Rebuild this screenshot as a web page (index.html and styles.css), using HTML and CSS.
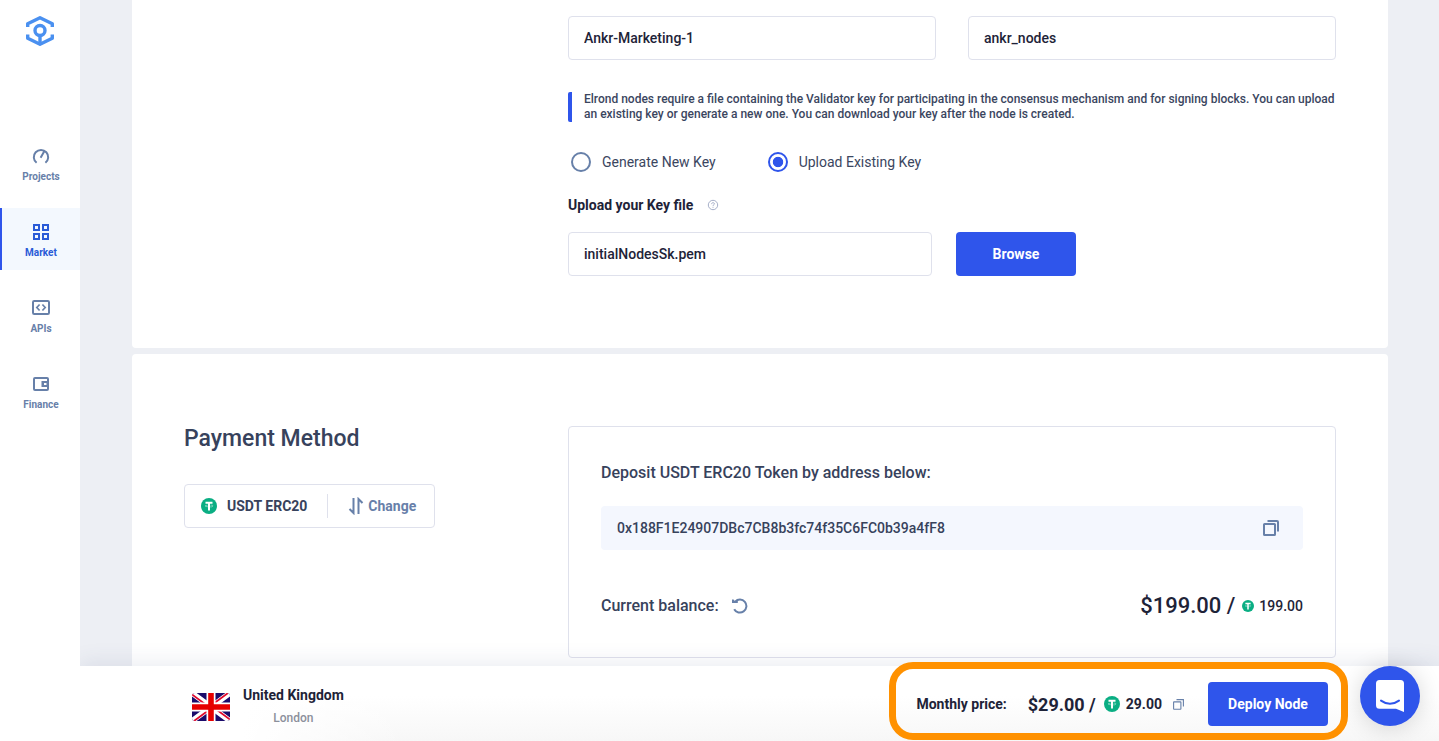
FILE: index.html
```html
<!DOCTYPE html>
<html lang="en">
<head>
<meta charset="utf-8">
<title>Deploy Node</title>
<link rel="stylesheet" href="styles.css">
</head>
<body>
<svg class="symbols" aria-hidden="true">
  <symbol id="tether" viewBox="0 0 16 16">
    <circle cx="8" cy="8" r="8" fill="#0aae83"/>
    <path d="M4.500 3.800h7v2H9v6.800H7V5.800H4.500z" fill="#fff"/>
    <path d="M6.500 7.200Q4 7.500 4 8T8 8.900 12 8 9.500 7.200" fill="none" stroke="#fff" stroke-width=".4"/>
  </symbol>
  <symbol id="copy" viewBox="0 0 16 16">
    <path d="M4.500 1H14q1 0 1 1v9.500" fill="none" stroke="currentColor" stroke-width="2"/>
    <rect x="1" y="4" width="11" height="11" rx=".6" fill="none" stroke="currentColor" stroke-width="2"/>
  </symbol>
  <symbol id="copy-thin" viewBox="0 0 11 11">
    <path d="M3.500.6h6.900v7" fill="none" stroke="currentColor" stroke-width="1.100"/>
    <rect x=".6" y="2.900" width="7.300" height="7.300" rx=".4" fill="none" stroke="currentColor" stroke-width="1.100"/>
  </symbol>
</svg>
<div class="app">
  <nav class="sidebar">
    <a class="logo" href="#" aria-label="Home">
      <svg width="30" height="32" viewBox="0 0 30 32" fill="none" stroke="#4a90f0" stroke-width="3.400" stroke-linejoin="round">
        <path d="M2.700 12V8.800L15 2.700l12.300 6.100V12"/>
        <path d="M2.700 19.500v3.700L15 29.300l12.300-6.100v-3.700"/>
        <circle cx="15" cy="15.500" r="5"/>
        <path d="M15 20.500v9"/>
      </svg>
    </a>
    <a class="nav-item" href="#">
      <svg width="18" height="18" viewBox="0 0 18 18" fill="none" stroke="currentColor" stroke-width="2">
        <path d="M4.600 15.800A7.200 7.200 0 1 1 13.400 15.800M8.600 10.800l3.400-6"/>
      </svg>
      <span>Projects</span>
    </a>
    <a class="nav-item active" href="#">
      <svg width="18" height="18" viewBox="0 0 18 18" fill="none" stroke="currentColor" stroke-width="2">
        <path d="M2 2h5v5H2zM11 2h5v5h-5zM2 11h5v5H2zM11 11h5v5h-5z"/>
      </svg>
      <span>Market</span>
    </a>
    <a class="nav-item" href="#">
      <svg width="18" height="18" viewBox="0 0 18 18" fill="none" stroke="currentColor" stroke-width="2">
        <rect x="1" y="2" width="16" height="13" rx="1.200"/>
        <path d="M7.600 5.500L4.800 8.500l2.800 3M10.400 5.500l2.800 3-2.800 3" stroke-width="1.700"/>
      </svg>
      <span>APIs</span>
    </a>
    <a class="nav-item" href="#">
      <svg width="18" height="18" viewBox="0 0 18 18" fill="none" stroke="currentColor" stroke-width="2">
        <rect x="2" y="3" width="14" height="12" rx="1"/>
        <path d="M9.500 6H17v6H9.500zM12 8v2h2.500V8z" fill="currentColor" fill-rule="evenodd" stroke="none"/>
      </svg>
      <span>Finance</span>
    </a>
  </nav>

  <div class="page">
    <main class="content">
      <section class="card card-key">
        <div class="card-body">
          <div class="field-pair">
            <input class="field" type="text" aria-label="Node name" value="Ankr-Marketing-1">
            <input class="field" type="text" aria-label="Project name" value="ankr_nodes">
          </div>
          <p class="note">Elrond nodes require a file containing the Validator key for participating in the consensus mechanism and for signing blocks. You can upload an existing key or generate a new one. You can download your key after the node is created.</p>
          <div class="choices">
            <label class="choice"><input type="radio" name="key"><span>Generate New Key</span></label>
            <label class="choice"><input type="radio" name="key" checked><span>Upload Existing Key</span></label>
          </div>
          <div class="file-label">
            <label for="key-file">Upload your Key file</label>
            <svg width="12" height="12" viewBox="0 0 12 12" fill="none" stroke="#a6afc9">
              <circle cx="6" cy="6" r="4.700"/>
              <path d="M4.600 5.100C4.600 3.100 7.500 3.300 7.400 4.900 7.300 5.900 6 5.800 6 7M6 7.800v1"/>
            </svg>
          </div>
          <div class="file-row">
            <input class="field" id="key-file" type="text" value="initialNodesSk.pem">
            <button class="button" type="button">Browse</button>
          </div>
        </div>
      </section>

      <section class="card card-payment">
        <div class="method">
          <h2>Payment Method</h2>
          <div class="method-box">
            <svg width="16" height="16"><use href="#tether"/></svg>
            <span class="method-name">USDT ERC20</span>
            <button class="change" type="button">
              <svg width="16" height="18" viewBox="0 0 16 18" fill="none" stroke="currentColor" stroke-width="2">
                <path d="M5.500 1v15L1.500 12M10.500 17V2l4 4"/>
              </svg>
              Change
            </button>
          </div>
        </div>
        <div class="deposit">
          <p class="deposit-title">Deposit USDT ERC20 Token by address below:</p>
          <div class="address">
            <span>0x188F1E24907DBc7CB8b3fc74f35C6FC0b39a4fF8</span>
            <button class="icon-button" type="button" aria-label="Copy address"><svg width="16" height="16"><use href="#copy"/></svg></button>
          </div>
          <div class="balance">
            <span class="balance-label">Current balance:</span>
            <button class="icon-button" type="button" aria-label="Refresh balance">
              <svg width="16" height="16" viewBox="0 0 16 16" fill="none" stroke="currentColor" stroke-width="2">
                <path d="M3.200 3.600A6.500 6.500 0 1 1 2.200 11.200"/>
                <path d="M0 1.500h1.600L2.800 3 5.800 2.500V5H0z" fill="currentColor" stroke="none"/>
              </svg>
            </button>
            <span class="balance-usd">$199.00 /</span>
            <svg width="12" height="12"><use href="#tether"/></svg>
            <span class="balance-token">199.00</span>
          </div>
        </div>
      </section>
    </main>

    <footer class="bar">
      <div class="region">
        <svg class="flag" width="38" height="28" viewBox="0 0 38 28">
          <path fill="#1b0b6b" d="M0 0h38v28H0z"/>
          <path d="M0 0l38 28M38 0L0 28" stroke="#fff" stroke-width="5.500"/>
          <path d="M0 1.500L17 14M38 26.500L21 14M36 0L19 12.500M2 28l17-12.500" stroke="#e0082d" stroke-width="1.700"/>
          <path d="M19 0v28M0 14h38" stroke="#fff" stroke-width="9"/>
          <path d="M19 0v28M0 14h38" stroke="#e60000" stroke-width="5.600"/>
        </svg>
        <div class="place"><strong>United Kingdom</strong><span>London</span></div>
      </div>
      <div class="summary">
        <span class="summary-label">Monthly price:</span>
        <span class="summary-usd">$29.00 /</span>
        <svg width="16" height="16"><use href="#tether"/></svg>
        <span class="summary-token">29.00</span>
        <button class="icon-button" type="button" aria-label="Copy price"><svg width="11" height="11"><use href="#copy-thin"/></svg></button>
        <button class="button" type="button">Deploy Node</button>
      </div>
    </footer>
  </div>
</div>
<button class="chat" type="button" aria-label="Open chat">
  <svg width="28" height="32" viewBox="0 0 28 32">
    <path d="M3.500 0h21Q28 0 28 3.500V32l-8-3.300H3.500Q0 28.700 0 25.200V3.500Q0 0 3.500 0z" fill="#fff"/>
    <path d="M5 20.600Q14 27 23 20.600" fill="none" stroke="#2f55eb" stroke-width="2" stroke-linecap="round"/>
  </svg>
</button>
</body>
</html>
```
FILE: styles.css
```css
* { box-sizing: border-box; }

body {
  margin: 0;
  background: #edeff4;
  color: #1e2338;
  font-family: Roboto, "Liberation Sans", sans-serif;
  font-size: 14px;
  font-weight: 500;
}

button, input { font: inherit; color: inherit; }
button { border: 0; padding: 0; background: none; cursor: pointer; }
p, h2 { margin: 0; }
svg { display: block; flex: none; }
.symbols { position: absolute; width: 0; height: 0; }

.app { display: flex; height: 100vh; overflow: hidden; }

.sidebar {
  position: relative;
  z-index: 1;
  display: flex;
  flex-direction: column;
  gap: 14px;
  width: 80px;
  flex: none;
  background: #fff;
}

.logo { align-self: center; padding: 15px 0 71px; }

.nav-item {
  display: flex;
  flex-direction: column;
  align-items: center;
  gap: 6px;
  height: 62px;
  padding: 15px 0 0 2px;
  color: #6780a9;
  font-size: 10px;
  font-weight: 700;
  line-height: 12px;
  text-decoration: none;
}

.nav-item.active {
  padding-left: 0;
  border-left: 2px solid #2f55eb;
  background: #f3f8fe;
  color: #2a5bd7;
}

.page { display: flex; flex: 1; flex-direction: column; min-width: 0; }

.content {
  display: flex;
  flex: 1;
  flex-direction: column;
  gap: 6px;
  min-height: 0;
  padding: 0 51px 0 52px;
  overflow: hidden;
}

.card {
  display: grid;
  grid-template-columns: 1fr 2fr;
  flex: none;
  padding: 72px 52px;
  border-radius: 4px;
  background: #fff;
}

.card-key { padding-top: 16px; border-radius: 0 0 4px 4px; }
.card-body { grid-column: 2; }
.field-pair { display: grid; grid-template-columns: 1fr 1fr; gap: 32px; }

.field {
  width: 100%;
  height: 44px;
  padding: 0 15px;
  border: 1px solid #dfe1ec;
  border-radius: 4px;
  background: #fff;
}

.note {
  margin-top: 32px;
  padding-left: 12px;
  border-left: 4px solid #2f55eb;
  border-radius: 2px;
  color: #3b4660;
  font-size: 12px;
  line-height: 15px;
}

.choices { display: flex; gap: 52px; margin-top: 28px; padding-left: 3px; }

.choice {
  display: flex;
  align-items: center;
  gap: 11px;
  color: #3b4660;
  font-weight: 400;
  line-height: 24px;
}

.choice input {
  appearance: none;
  width: 20px;
  height: 20px;
  margin: 0;
  border: 2px solid #6780a9;
  border-radius: 50%;
}

.choice input:checked {
  border-color: #2f55eb;
  background: radial-gradient(closest-side, #2f55eb 60%, transparent 70%);
}

.file-label {
  display: flex;
  align-items: center;
  gap: 14px;
  margin: 21px 0 17px;
  font-weight: 700;
  line-height: 20px;
}

.file-row { display: flex; gap: 24px; }
.file-row .field { width: 364px; }

.button {
  width: 120px;
  height: 44px;
  border-radius: 4px;
  background: #2f55eb;
  color: #fff;
  font-weight: 700;
}

h2 { color: #37425c; font-size: 23px; font-weight: 500; line-height: 26px; }

.method-box {
  display: inline-flex;
  align-items: center;
  height: 44px;
  margin-top: 32px;
  padding: 0 18px 0 16px;
  border: 1px solid #dfe1ec;
  border-radius: 4px;
  font-weight: 700;
}

.method-name { padding: 0 20px 0 10px; color: #37425c; line-height: 24px; }

.change {
  display: flex;
  align-items: center;
  gap: 4px;
  height: 24px;
  padding-left: 20px;
  border-left: 1px solid #dfe1ec;
  color: #6780a9;
}

.deposit {
  padding: 32px 32px 35px;
  border: 1px solid #dfe1ec;
  border-radius: 4px;
  color: #37425c;
}

.deposit-title { font-size: 16px; line-height: 28px; }

.address {
  display: flex;
  align-items: center;
  justify-content: space-between;
  height: 44px;
  margin-top: 19px;
  padding: 0 24px 0 16px;
  border-radius: 4px;
  background: #f4f7fe;
}

.icon-button { color: #6780a9; }

.balance {
  display: flex;
  align-items: center;
  margin-top: 40px;
  line-height: 32px;
  color: #1e2338;
}

.balance-label { margin-right: 13px; color: #37425c; font-size: 16px; }
.balance-usd { margin: 0 7px 0 auto; font-size: 22px; }
.balance-token { margin-left: 5px; }

.bar {
  display: flex;
  align-items: center;
  justify-content: space-between;
  flex: none;
  height: 75px;
  padding: 0 91px 0 112px;
  background:
    linear-gradient(to right, #fff 12%, transparent 24%),
    linear-gradient(#fff 40%, #f7f7f7);
  box-shadow: 0 -4px 20px rgba(55, 80, 130, .1);
}

.region { display: flex; align-items: center; gap: 13px; padding-top: 6px; }
.flag { border-radius: 3px; }
.place { display: flex; flex-direction: column; align-items: center; line-height: 23px; }
.place strong { font-weight: 700; }
.place span { color: #8c909c; font-size: 12px; }

.summary {
  display: flex;
  align-items: center;
  height: 78px;
  margin-bottom: 6px;
  padding: 7px 13px 0 20px;
  border: 7px solid #ff9100;
  border-radius: 24px;
}

.summary-label { margin-right: 21px; font-weight: 700; }
.summary-usd { margin-right: 8px; font-size: 18px; font-weight: 700; }
.summary-token { margin: 0 11px 0 6px; font-weight: 700; }
.summary .button { margin-left: 24px; }

.chat {
  position: fixed;
  right: 19px;
  bottom: 15px;
  display: flex;
  align-items: center;
  justify-content: center;
  width: 60px;
  height: 60px;
  border-radius: 50%;
  background: #2f55eb;
  box-shadow: 0 2px 24px rgba(0, 0, 0, .16);
}
```
